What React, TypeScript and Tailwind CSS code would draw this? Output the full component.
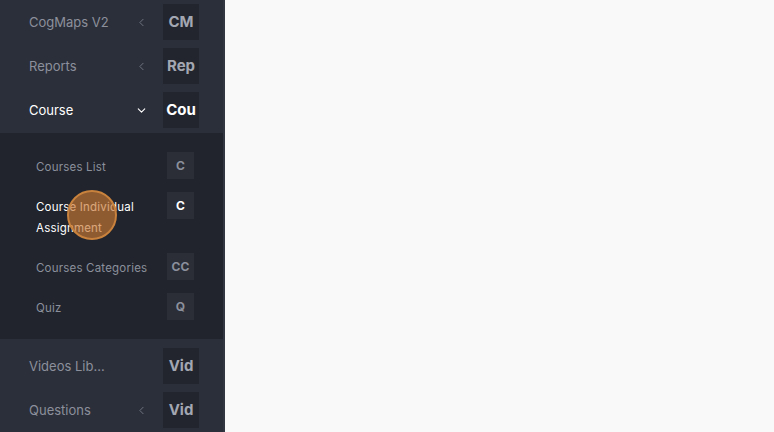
import { ChevronLeft, ChevronDown } from "lucide-react";

type TopItem = { label: string; badge: string; chevron?: "left" | "down"; active?: boolean };

const topItems: TopItem[] = [
  { label: "CogMaps V2", badge: "CM", chevron: "left" },
  { label: "Reports", badge: "Rep", chevron: "left" },
  { label: "Course", badge: "Cou", chevron: "down", active: true },
];

const subItems = [
  { label: "Courses List", badge: "C" },
  { label: "Course Individual Assignment", badge: "C", active: true },
  { label: "Courses Categories", badge: "CC" },
  { label: "Quiz", badge: "Q" },
];

const bottomItems: TopItem[] = [
  { label: "Videos Lib…", badge: "Vid" },
  { label: "Questions", badge: "Vid", chevron: "left" },
];

function TopRow({ item }: { item: TopItem }) {
  return (
    <div className="h-[44px] flex items-center pl-[29px] pr-[24px]">
      <span className={`flex-1 text-[13px] pt-[1px] ${item.active ? "text-white" : "text-[#8b909c]"}`}>
        {item.label}
      </span>
      <span className="w-[22px] flex justify-center mr-[11px]">
        {item.chevron === "left" && <ChevronLeft size={13} strokeWidth={1.5} className="text-[#7d8290]" />}
        {item.chevron === "down" && <ChevronDown size={13} strokeWidth={2} className="text-white" />}
      </span>
      <span
        className={`w-[36px] h-[36px] flex items-center justify-center bg-[#22252d] text-[15px] font-bold ${
          item.active ? "text-white" : "text-[#a3a7b2]"
        }`}
      >
        {item.badge}
      </span>
    </div>
  );
}

export default function App() {
  return (
    <div
      className="w-[774px] h-[432px] flex bg-[#f9f9fa] overflow-hidden"
      style={{ fontFamily: "Inter, 'Noto Sans', sans-serif" }}
    >
      <div className="w-[225px] h-full bg-[#2b2f39] border-r-2 border-[#323641] flex flex-col relative">
        <div>
          {topItems.map((it) => (
            <TopRow key={it.label} item={it} />
          ))}
        </div>
        <div className="mt-[1px] bg-[#21242c] pt-[19px] pb-[19px] flex flex-col gap-[13px]">
          {subItems.map((s) => (
            <div key={s.label} className="flex items-start pl-[36px] pr-[29px]">
              <span
                className={`flex-1 pt-[5px] pb-[1px] text-[11.5px] leading-[21px] tracking-[0.2px] pr-[6px] ${
                  s.active ? "text-white" : "text-[#8b909c]"
                }`}
              >
                {s.label}
              </span>
              <span
                className={`w-[27px] h-[27px] flex items-center justify-center bg-[#2b2e37] text-[12px] font-bold ${
                  s.active ? "text-white" : "text-[#8b909c]"
                }`}
              >
                {s.badge}
              </span>
            </div>
          ))}
        </div>
        <div className="mt-[5px]">
          {bottomItems.map((it) => (
            <TopRow key={it.label + it.badge} item={it} />
          ))}
        </div>
        <div className="absolute left-[67px] top-[190px] w-[50px] h-[50px] rounded-full border-2 border-[#c9823d] bg-[rgba(201,120,50,0.65)]" />
      </div>
      <div className="flex-1" />
    </div>
  );
}
